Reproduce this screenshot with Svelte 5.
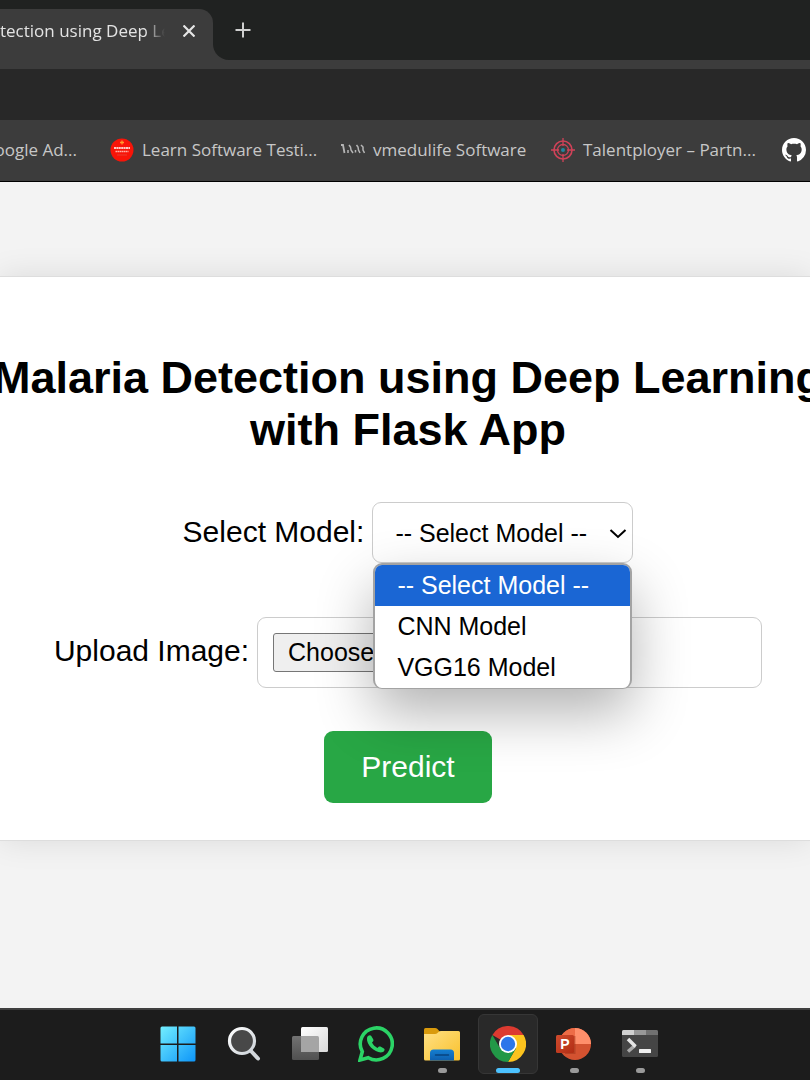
<script lang="ts">
	const options = ['-- Select Model --', 'CNN Model', 'VGG16 Model'];

	let selected = $state(options[0]);
	let open = $state(true);

	function choose(option: string) {
		selected = option;
		open = false;
	}

	function toggle(event: MouseEvent) {
		event.preventDefault();
		open = !open;
	}
</script>

<div class="screen">
	<header>
		<div class="tab-strip">
			<div class="tab-slot">
				<div class="tab">
					<span class="tab-title">tection using Deep Le</span>
					<button class="icon-button" aria-label="Close tab">
						<svg width="12" height="12" viewBox="0 0 12 12">
							<path d="M.5.5l11 11M11.5.5l-11 11" stroke="#e6e6e6" stroke-width="2.2" />
						</svg>
					</button>
				</div>
			</div>
			<div class="strip-rest">
				<button class="icon-button" aria-label="New tab">
					<svg width="16" height="16" viewBox="0 0 16 16">
						<path d="M8 .5v15M.5 8h15" stroke="#d0d0d0" stroke-width="2" />
					</svg>
				</button>
			</div>
		</div>

		<div class="address-row"></div>

		<nav class="bookmarks" aria-label="Bookmarks">
			<a class="bookmark first" href="#ads">Google Ad...</a>
			<a class="bookmark testing" href="#testing">
				<svg width="24" height="24" viewBox="0 0 24 24">
					<circle cx="12" cy="12" r="11.5" fill="#f81408" />
					<path d="M12 2.500v4M10 4.500h4" stroke="#ff9a2e" stroke-width="1.300" />
					<path d="M4 10h16" stroke="#ffc9c4" stroke-width="1.800" stroke-dasharray="2 .4" />
					<path d="M5.500 13.500h13" stroke="#ffb0a8" stroke-width="1.600" stroke-dasharray="1.600 .4" />
					<path d="M7 17h10" stroke="#e83c30" stroke-width="1" />
				</svg>
				<span>Learn Software Testi...</span>
			</a>
			<a class="bookmark edu" href="#vmedulife">
				<svg width="24" height="24" viewBox="0 0 24 24">
					<g fill="none" stroke="#b5b5b5">
						<path d="M0 7h2l1.500 8" stroke-width="1.800" />
						<path d="M7 15v-3M8 7l1.500 2 .5 3 2 3" stroke-width="1.500" />
						<path d="M14.500 14.500V12M15.500 7l1.500 2 .5 3 1.500 3" stroke-width="1.500" />
						<path d="M20 7l2 2v3l1.500 3" stroke-width="1.500" />
					</g>
				</svg>
				<span>vmedulife Software</span>
			</a>
			<a class="bookmark talent" href="#talentployer">
				<svg width="24" height="24" viewBox="0 0 24 24">
					<g fill="none" stroke="#cf4258">
						<circle cx="12" cy="12" r="9" stroke-width="1.600" />
						<circle cx="12" cy="12" r="5.500" stroke-width="1.300" />
						<path d="M12 0v8M12 16v8M0 12h8M16 12h8" stroke-width="1.300" />
					</g>
					<circle cx="12" cy="12" r="2" fill="#2385a0" />
				</svg>
				<span>Talentployer – Partn...</span>
			</a>
			<a class="bookmark" href="#github" aria-label="GitHub">
				<svg width="24" height="24" viewBox="0 0 16 16" fill="#fff">
					<path
						d="M8 0C3.58 0 0 3.58 0 8c0 3.54 2.29 6.53 5.47 7.59.4.07.55-.17.55-.38 0-.19-.01-.82-.01-1.49-2.01.37-2.53-.49-2.69-.94-.09-.23-.48-.94-.82-1.13-.28-.15-.68-.52-.01-.53.63-.01 1.08.58 1.23.82.72 1.21 1.87.87 2.33.66.07-.52.28-.87.51-1.07-1.78-.2-3.64-.89-3.64-3.95 0-.87.31-1.59.82-2.15-.08-.2-.36-1.02.08-2.12 0 0 .67-.21 2.2.82.64-.18 1.32-.27 2-.27s1.36.09 2 .27c1.53-1.04 2.2-.82 2.2-.82.44 1.1.16 1.92.08 2.12.51.56.82 1.27.82 2.15 0 3.07-1.87 3.75-3.65 3.95.29.25.54.73.54 1.48 0 1.07-.01 1.93-.01 2.2 0 .21.15.46.55.38A8.01 8.01 0 0 0 16 8c0-4.42-3.58-8-8-8z"
					/>
				</svg>
			</a>
		</nav>
	</header>

	<main>
		<section class="card">
			<h1>Malaria Detection using Deep Learning <br />with Flask App</h1>

			<form onsubmit={(event) => event.preventDefault()}>
				<div class="field model">
					<label for="model">Select Model:</label>
					<div class="select-box">
						<select id="model" bind:value={selected} onmousedown={toggle}>
							{#each options as option}
								<option>{option}</option>
							{/each}
						</select>
						<svg class="chevron" width="18" height="10" viewBox="0 0 18 10">
							<path d="M1.500 1l7.500 7L16.500 1" fill="none" stroke="#000" stroke-width="2" />
						</svg>

						{#if open}
							<div class="menu" role="listbox" aria-label="Model">
								{#each options as option}
									<button
										type="button"
										role="option"
										class="menu-item"
										class:active={selected === option}
										aria-selected={selected === option}
										onclick={() => choose(option)}
									>
										{option}
									</button>
								{/each}
							</div>
						{/if}
					</div>
				</div>

				<div class="field upload">
					<label for="image">Upload Image:</label>
					<input id="image" type="file" accept="image/*" />
				</div>

				<button class="predict" type="submit">Predict</button>
			</form>
		</section>
	</main>

	<footer class="taskbar">
		<button class="app" aria-label="Start">
			<svg width="36" height="36" viewBox="0 0 36 36">
				<defs>
					<linearGradient id="start" gradientUnits="userSpaceOnUse" x1="0" y1="0" x2="36" y2="36">
						<stop offset="0" stop-color="#74f0ff" />
						<stop offset="1" stop-color="#0c94f8" />
					</linearGradient>
				</defs>
				<path
					fill="url(#start)"
					d="M2 .5h15v17H.5V2A1.500 1.500 0 0 1 2 .5zM18.500 .5H34A1.500 1.500 0 0 1 35.500 2v15.500h-17zM.5 19H17v16.500H2A1.500 1.500 0 0 1 .5 34zM18.500 19h17v15a1.500 1.500 0 0 1-1.500 1.500H18.500z"
				/>
			</svg>
		</button>
		<button class="app" aria-label="Search">
			<svg width="36" height="36" viewBox="0 0 36 36">
				<defs>
					<linearGradient id="lens" x1="0" y1="0" x2="1" y2="1">
						<stop offset="0" stop-color="#fff" />
						<stop offset="1" stop-color="#ccd2d8" />
					</linearGradient>
				</defs>
				<path d="M25 25l7 7.500" stroke="#d3d8dc" stroke-width="4" stroke-linecap="round" />
				<circle cx="16" cy="15" r="12.500" fill="#484848" stroke="url(#lens)" stroke-width="3.200" />
			</svg>
		</button>
		<button class="app" aria-label="Task view">
			<svg width="36" height="36" viewBox="0 0 36 36">
				<defs>
					<linearGradient id="pane" x1="0" y1="0" x2="1" y2="1">
						<stop offset="0" stop-color="#fff" />
						<stop offset="1" stop-color="#d9d9d9" />
					</linearGradient>
					<linearGradient id="shade" x1="0" y1="0" x2="0" y2="1">
						<stop offset="0" stop-color="#727272" />
						<stop offset="1" stop-color="#505050" />
					</linearGradient>
				</defs>
				<rect x="0" y="10" width="27" height="24" rx="1.500" fill="url(#shade)" />
				<rect x="9" y="1" width="27" height="25" rx="1.500" fill="url(#pane)" />
				<path d="M9 10h16.500a1.500 1.500 0 0 1 1.500 1.500V26H9z" fill="#a5a5a5" />
			</svg>
		</button>
		<button class="app" aria-label="WhatsApp">
			<svg width="36" height="36" viewBox="0 0 36 36">
				<path
					d="M2 34l2.300-8.300A16 16 0 1 1 10.300 31.800z"
					fill="none"
					stroke="#2bd366"
					stroke-width="3.600"
				/>
				<path
					d="M9 12c.4-2.200 3-3.600 4.300-2l2 3.600c.6 1.200-.2 2-1.300 3 1.300 2.600 3 4.200 5.400 5.300 1-1.200 1.800-1.900 3-1.300l3.500 1.900c1.600 1 .2 3.300-1.800 3.800C17.500 27.300 8 19 9 12z"
					fill="#2bd366"
				/>
			</svg>
		</button>
		<button class="app running" aria-label="File Explorer">
			<svg width="36" height="36" viewBox="0 0 36 36">
				<defs>
					<linearGradient id="folder" x1="0" y1="0" x2="1" y2="1">
						<stop offset="0" stop-color="#ffe084" />
						<stop offset="1" stop-color="#f9c12c" />
					</linearGradient>
					<linearGradient id="clip" x1="0" y1="0" x2="0" y2="1">
						<stop offset="0" stop-color="#147fd1" />
						<stop offset="1" stop-color="#0e5fae" />
					</linearGradient>
				</defs>
				<path d="M0 9V3.500Q0 2 1.500 2H11q1.500 0 2.500 1l3 3.500V9z" fill="#d99a0c" />
				<path
					d="M0 8h11q1.500 0 2.500-1l1-1q1-1 2.500-1h17.500Q36 5 36 6.500V33q0 1.500-1.500 1.500h-33Q0 34.500 0 33z"
					fill="url(#folder)"
				/>
				<path d="M6 34.500V27q0-3.500 3.500-3.500h17Q30 23.500 30 27v7.500z" fill="url(#clip)" />
				<path d="M11.500 29h13" stroke="#07437f" stroke-width="1.500" stroke-linecap="round" />
			</svg>
		</button>
		<button class="app running current" aria-label="Chrome">
			<svg width="36" height="36" viewBox="0 0 36 36">
				<path d="M18 18L2.400 9A18 18 0 0 1 33.600 9z" fill="#dc3a30" />
				<path d="M18 9h15.600A18 18 0 0 1 18 36l7.800-13.500z" fill="#fcc31e" />
				<path d="M2.400 9l7.800 13.500 15.600 0L18 36A18 18 0 0 1 2.400 9z" fill="#229847" />
				<circle cx="18" cy="18" r="9" fill="#fff" />
				<circle cx="18" cy="18" r="7.200" fill="#2c76ea" />
			</svg>
		</button>
		<button class="app running" aria-label="PowerPoint">
			<svg width="36" height="36" viewBox="0 0 36 36">
				<defs>
					<linearGradient id="badge" x1="0" y1="0" x2="1" y2="1">
						<stop offset="0" stop-color="#cf4b2d" />
						<stop offset="1" stop-color="#b22d14" />
					</linearGradient>
				</defs>
				<circle cx="19" cy="18" r="16" fill="#d35230" />
				<path d="M19 18V2A16 16 0 0 0 3 18z" fill="#ed6c47" />
				<path d="M19 2a16 16 0 0 1 16 16H19z" fill="#ff8f6b" />
				<path d="M9 10h10.500v18H9z" fill="#8f2a15" opacity=".4" />
				<rect x="0" y="9" width="18" height="18" rx="1.500" fill="url(#badge)" />
				<text x="9" y="23" text-anchor="middle">P</text>
			</svg>
		</button>
		<button class="app running" aria-label="Terminal">
			<svg width="36" height="36" viewBox="0 0 36 36">
				<rect y="4" width="36" height="27" rx="1.500" fill="#454545" />
				<path d="M0 9V5.500Q0 4 1.500 4H12v5z" fill="#d0d0d0" />
				<path d="M12 4h12v5H12z" fill="#989898" />
				<path d="M24 4h10.500Q36 4 36 5.500V9H24z" fill="#717171" />
				<path d="M6 19.500m0 6l7-6" stroke="#a9a9a9" stroke-width="3.500" />
				<path d="M6 13l7.500 7.500" stroke="#e6e6e6" stroke-width="3.500" />
				<rect x="17" y="23" width="12" height="4" rx=".6" fill="#eee" />
			</svg>
		</button>
	</footer>
</div>

<style>
	:global(body) {
		margin: 0;
		overflow-x: hidden;
	}

	.screen {
		display: grid;
		grid-template-rows: auto 1fr auto;
		min-height: 100vh;
		overflow: hidden;
		background: #f3f3f3;
		color: #000;
		font-family: 'Liberation Sans', Arial, sans-serif;
	}

	button {
		border: 0;
		padding: 0;
		background: none;
		color: inherit;
		font: inherit;
		cursor: pointer;
	}

	svg {
		display: block;
		flex-shrink: 0;
	}

	header {
		border-bottom: 1px solid #000;
		background: #3c3c3c;
		color: #c7c7c7;
		font-family: 'Open Sans', 'Noto Sans', sans-serif;
		font-size: 17px;
	}

	.tab-strip {
		display: flex;
		height: 60px;
		padding-bottom: 9px;
	}

	.tab-slot {
		padding-top: 9px;
		background: #202221;
	}

	.tab {
		display: flex;
		align-items: center;
		box-sizing: border-box;
		width: 213px;
		height: 51px;
		padding: 0 12px 8px 0;
		border-radius: 0 14px 0 0;
		background: #3c3c3c;
		color: #e3e3e3;
	}

	.tab-title {
		flex: 1;
		overflow: hidden;
		white-space: nowrap;
		mask-image: linear-gradient(to right, #000 88%, transparent);
	}

	.icon-button {
		display: flex;
		align-items: center;
		justify-content: center;
		width: 24px;
		height: 24px;
		margin-left: 12px;
	}

	.strip-rest {
		display: flex;
		flex: 1;
		align-items: center;
		padding-left: 6px;
		border-bottom-left-radius: 16px;
		background: #202221;
	}

	.address-row {
		height: 51px;
		background: #282828;
	}

	.bookmarks {
		display: flex;
		align-items: center;
		height: 59px;
		padding-bottom: 2px;
	}

	.bookmark {
		display: flex;
		flex-shrink: 0;
		align-items: center;
		gap: 8px;
		color: inherit;
		text-decoration: none;
		white-space: nowrap;
	}

	.first {
		justify-content: flex-end;
		width: 77px;
		margin-right: 33px;
	}

	.testing {
		width: 231px;
	}

	.edu {
		width: 210px;
	}

	.talent {
		width: 231px;
	}

	main {
		padding: 94px 0;
	}

	.card {
		padding: 75px 0 37px 6px;
		border: solid #ddd;
		border-width: 1px 0;
		background: #fff;
		box-shadow: 0 0 30px rgba(0, 0, 0, 0.1);
	}

	h1 {
		margin: 0 -40px 46px;
		font-size: 45px;
		line-height: 52px;
		text-align: center;
	}

	form {
		display: flex;
		flex-direction: column;
		align-items: center;
	}

	.field {
		display: flex;
		align-items: baseline;
		justify-content: center;
		gap: 8px;
		font-size: 30px;
		line-height: 34px;
	}

	.model {
		margin-bottom: 54px;
	}

	.upload {
		margin-bottom: 43px;
	}

	.select-box {
		position: relative;
	}

	select,
	input {
		box-sizing: border-box;
		border: 1px solid #ccc;
		border-radius: 9px;
		background: #fff;
		color: #000;
		font-family: inherit;
		font-size: 25px;
	}

	select {
		display: block;
		width: 261px;
		height: 61px;
		padding: 0 22px;
		appearance: none;
	}

	.chevron {
		position: absolute;
		top: 27px;
		right: 6px;
		pointer-events: none;
	}

	.menu {
		position: absolute;
		top: 100%;
		right: 1px;
		left: 1px;
		z-index: 1;
		overflow: hidden;
		border: 2px solid #a3a3a3;
		border-bottom-width: 1px;
		border-radius: 9px;
		background: #fff;
		box-shadow: 0 24px 56px rgba(0, 0, 0, 0.3);
	}

	.menu-item {
		display: block;
		width: 100%;
		padding: 0 22px;
		font-size: 25px;
		line-height: 41px;
		text-align: left;
	}

	.active {
		background: #1a66d4;
		color: #fff;
	}

	input {
		width: 505px;
		height: 71px;
		padding: 15px;
	}

	input::file-selector-button {
		height: 39px;
		margin-right: 10px;
		padding: 0 14px;
		border: 1px solid #767676;
		border-radius: 3px;
		background: #efefef;
		font-family: inherit;
		font-size: 25px;
	}

	.predict {
		width: 168px;
		height: 72px;
		border-radius: 9px;
		background: #28a745;
		color: #fff;
		font-size: 30px;
	}

	.taskbar {
		display: flex;
		gap: 6px;
		justify-content: center;
		height: 66px;
		padding: 4px 0 0 8px;
		border-top: 2px solid #3f3f3f;
		background: #1c1c1c;
	}

	.app {
		position: relative;
		display: flex;
		align-items: center;
		justify-content: center;
		box-sizing: border-box;
		width: 60px;
		height: 60px;
		border-radius: 6px;
	}

	.running::after {
		position: absolute;
		bottom: 1px;
		width: 9px;
		height: 5px;
		border-radius: 3px;
		background: #9a9a9a;
		content: '';
	}

	.current {
		border: 1px solid #363636;
		background: #292929;
	}

	.current::after {
		bottom: 0;
		width: 24px;
		background: #4cc2ff;
	}

	.app text {
		fill: #fff;
		font-family: 'Liberation Sans', Arial, sans-serif;
		font-size: 14px;
		font-weight: bold;
	}
</style>
